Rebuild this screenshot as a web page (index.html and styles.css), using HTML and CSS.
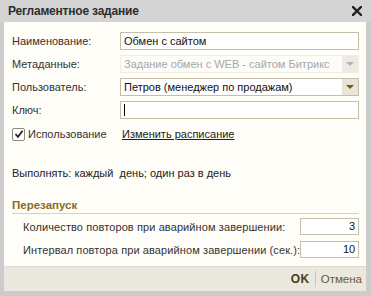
FILE: index.html
```html
<!DOCTYPE html>
<html lang="ru">
<head>
<meta charset="utf-8">
<link rel="stylesheet" href="styles.css">
</head>
<body>
<div class="win">
  <div class="titlebar">
    <span class="title">Регламентное задание</span>
    <svg class="close" width="10" height="10" viewBox="0 0 10 10"><path d="M1 1 L9 9 M9 1 L1 9" stroke="#222" stroke-width="2.4" stroke-linecap="square"/></svg>
  </div>
  <div class="content">
    <div class="row">
      <span class="label">Наименование:</span>
      <div class="field"><span class="val">Обмен с сайтом</span></div>
    </div>
    <div class="row">
      <span class="label">Метаданные:</span>
      <div class="field disabled"><span class="val">Задание обмен с WEB - сайтом Битрикс</span><span class="btn"><span class="arrow"></span></span></div>
    </div>
    <div class="row">
      <span class="label">Пользователь:</span>
      <div class="field"><span class="val">Петров (менеджер по продажам)</span><span class="btn"><span class="arrow"></span></span></div>
    </div>
    <div class="row">
      <span class="label">Ключ:</span>
      <div class="field"><span class="caret"></span></div>
    </div>
    <div class="checkrow">
      <span class="check"><svg width="10" height="10" viewBox="0 0 10 10"><path d="M1.5 5 L4 7.8 L8.6 1.8" fill="none" stroke="#222" stroke-width="1.8"/></svg></span>
      <span class="checklabel">Использование</span>
      <span class="link">Изменить расписание</span>
    </div>
    <div class="schedule">Выполнять: каждый&nbsp; день; один раз в день</div>
    <div class="section">Перезапуск</div>
    <div class="nrows">
      <div class="nrow">
        <span class="nlabel">Количество повторов при аварийном завершении:</span>
        <div class="nfield">3</div>
      </div>
      <div class="nrow">
        <span class="nlabel">Интервал повтора при аварийном завершении (сек.):</span>
        <div class="nfield">10</div>
      </div>
    </div>
  </div>
  <div class="footer">
    <span class="ok">OK</span>
    <span class="sep"></span>
    <span class="cancel">Отмена</span>
  </div>
</div>
</body>
</html>
```
FILE: styles.css
```css
html, body {
  margin: 0;
  padding: 0;
}
body {
  width: 371px;
  height: 296px;
  background: #c9c9c9;
  font-family: "Liberation Sans", Arial, sans-serif;
  font-size: 11px;
  color: #333;
  overflow: hidden;
}
.win {
  display: flex;
  flex-direction: column;
  height: 296px;
  box-sizing: border-box;
  padding: 0 5px 5px 4px;
  background: #cccccc;
}
.titlebar {
  height: 22px;
  display: flex;
  align-items: center;
  justify-content: space-between;
  margin: 0 -5px 0 -4px;
  padding: 0 9px 0 8px;
  background: #d4d4d4;
}
.title {
  font-weight: bold;
  font-size: 12px;
  color: #2e2e2e;
  letter-spacing: -0.2px;
}
.close {
  display: block;
}
.content {
  flex: 1;
  background: #fffdf8;
  padding: 10px 7px 0 8px;
  display: flex;
  flex-direction: column;
}
.row {
  display: flex;
  align-items: center;
  height: 18px;
  margin-bottom: 5px;
}
.label {
  width: 108px;
  flex: none;
  color: #333;
}
.field {
  flex: 1;
  height: 18px;
  box-sizing: border-box;
  border: 1px solid #c4bfa6;
  background: #fff;
  display: flex;
  align-items: center;
  padding-left: 3px;
  color: #111;
}
.field .val {
  flex: 1;
  white-space: nowrap;
  overflow: hidden;
}
.field.disabled {
  border-color: #f0ede3;
  background: #fdfcf8;
  color: #a8a8a8;
}
.btn {
  width: 16px;
  height: 16px;
  flex: none;
  background: #e8e4d8;
  display: flex;
  align-items: center;
  justify-content: center;
}
.disabled .btn {
  background: #eeebe3;
}
.arrow {
  width: 0;
  height: 0;
  border-left: 4px solid transparent;
  border-right: 4px solid transparent;
  border-top: 4px solid #6e5d1e;
}
.disabled .arrow {
  border-top-color: #b3b3b3;
}
.caret {
  width: 1px;
  height: 12px;
  background: #000;
}
.checkrow {
  display: flex;
  align-items: center;
  height: 18px;
  margin-top: 1px;
}
.check {
  width: 11px;
  height: 11px;
  border: 1px solid #8c8a80;
  border-radius: 2px;
  background: #fff;
  display: flex;
  align-items: center;
  justify-content: center;
}
.checklabel {
  margin-left: 3px;
  width: 94px;
}
.link {
  text-decoration: underline;
  color: #222;
}
.schedule {
  margin-top: 23px;
  height: 14px;
  line-height: 14px;
  color: #222;
}
.section {
  margin-top: 18px;
  font-weight: bold;
  font-size: 11.5px;
  color: #8a6b1e;
  line-height: 14px;
  height: 14px;
  padding-bottom: 1px;
  border-bottom: 1px solid #dcd2b0;
}
.nrows {
  display: flex;
  flex-direction: column;
  gap: 6px;
  margin-top: 4px;
}
.nrow {
  display: flex;
  align-items: center;
  justify-content: space-between;
  height: 17px;
  padding-left: 11px;
}
.nlabel {
  color: #333;
  white-space: nowrap;
  letter-spacing: 0.1px;
}
.nfield {
  flex: none;
  width: 59px;
  height: 17px;
  box-sizing: border-box;
  border: 1px solid #c4bfa6;
  background: #fff;
  text-align: right;
  padding-right: 3px;
  line-height: 15px;
  color: #111;
}
.footer {
  height: 24px;
  background: #ebe8df;
  border-top: 1px solid #dedad0;
  display: flex;
  align-items: center;
  justify-content: flex-end;
  padding-right: 4px;
}
.ok {
  font-weight: bold;
  font-size: 12px;
  color: #4a3d17;
  letter-spacing: 0.5px;
}
.sep {
  width: 1px;
  height: 16px;
  background: #cfc8ae;
  margin: 0 5px 0 5px;
}
.cancel {
  color: #6a5a32;
  font-size: 11.5px;
}
```
